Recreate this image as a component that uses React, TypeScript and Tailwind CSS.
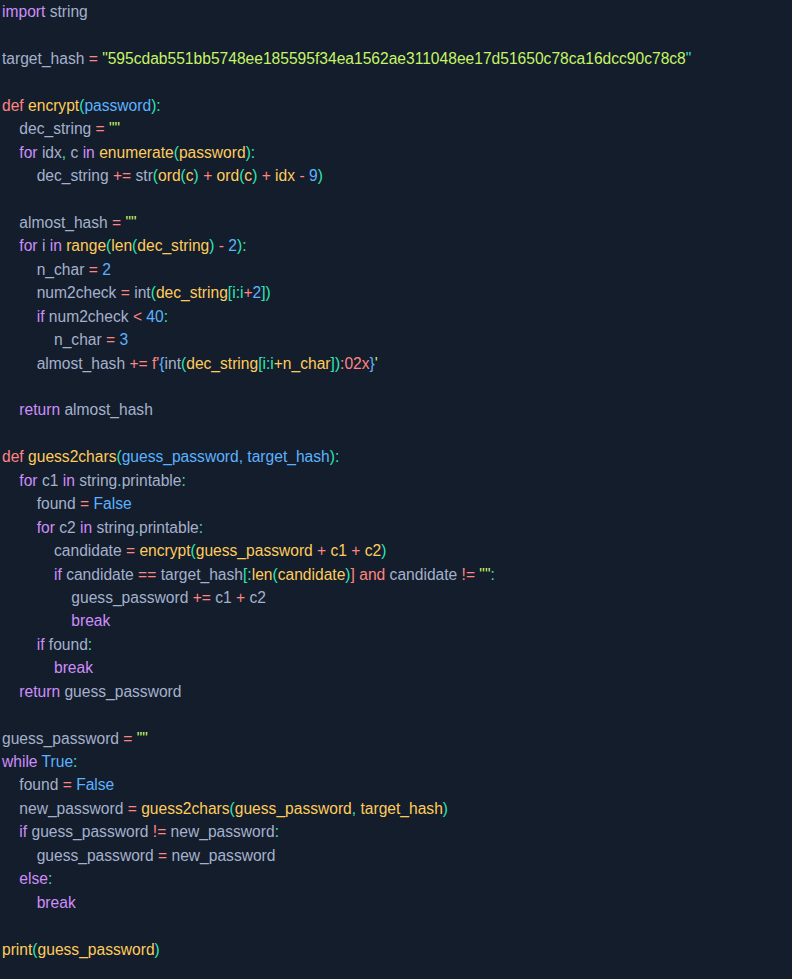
const C = {
  t: 'text-[#a4b1cd]',
  k: 'text-[#cf8dfb]',
  r: 'text-[#ff8484]',
  y: 'text-[#ffcc5c]',
  b: 'text-[#5cb2ff]',
  p: 'text-[#2ee6b6]',
  g: 'text-[#c5f467]',
};

type Tok = [keyof typeof C, string];

const I1 = '    ';
const I2 = '        ';
const I3 = '            ';
const I4 = '                ';

const LINES: Tok[][] = [
  [['k', 'import'], ['t', ' string']],
  [],
  [['t', 'target_hash '], ['r', '='], ['t', ' '], ['g', '"595cdab551bb5748ee185595f34ea1562ae311048ee17d51650c78ca16dcc90c78c8'], ['p', '"']],
  [],
  [['r', 'def'], ['t', ' '], ['y', 'encrypt'], ['p', '('], ['b', 'password'], ['p', '):']],
  [['t', I1 + 'dec_string '], ['r', '='], ['t', ' '], ['g', '""']],
  [['t', I1], ['k', 'for'], ['t', ' idx'], ['p', ','], ['t', ' c '], ['k', 'in'], ['t', ' '], ['y', 'enumerate'], ['p', '('], ['y', 'password'], ['p', '):']],
  [['t', I2 + 'dec_string '], ['r', '+='], ['t', ' str'], ['p', '('], ['y', 'ord'], ['p', '('], ['y', 'c'], ['p', ')'], ['t', ' '], ['r', '+'], ['t', ' '], ['y', 'ord'], ['p', '('], ['y', 'c'], ['p', ')'], ['t', ' '], ['r', '+'], ['y', ' idx '], ['r', '-'], ['t', ' '], ['b', '9'], ['p', ')']],
  [],
  [['t', I1 + 'almost_hash '], ['r', '='], ['t', ' '], ['g', '""']],
  [['t', I1], ['k', 'for'], ['t', ' i '], ['k', 'in'], ['t', ' '], ['y', 'range'], ['p', '('], ['y', 'len'], ['p', '('], ['y', 'dec_string'], ['p', ')'], ['t', ' '], ['r', '-'], ['t', ' '], ['b', '2'], ['p', '):']],
  [['t', I2 + 'n_char '], ['r', '='], ['t', ' '], ['b', '2']],
  [['t', I2 + 'num2check '], ['r', '='], ['t', ' int'], ['p', '('], ['y', 'dec_string'], ['p', '[i:i'], ['r', '+'], ['b', '2'], ['p', '])']],
  [['t', I2], ['k', 'if'], ['t', ' num2check '], ['r', '<'], ['t', ' '], ['b', '40'], ['p', ':']],
  [['t', I3 + 'n_char '], ['r', '='], ['t', ' '], ['b', '3']],
  [['t', I2 + 'almost_hash '], ['r', '+='], ['t', ' '], ['r', "f'"], ['b', '{'], ['t', 'int'], ['p', '('], ['y', 'dec_string'], ['p', '[i:i'], ['y', '+n_char'], ['p', '])'], ['r', ':02x'], ['b', '}'], ['g', "'"]],
  [],
  [['t', I1], ['k', 'return'], ['t', ' almost_hash']],
  [],
  [['r', 'def'], ['t', ' '], ['y', 'guess2chars'], ['p', '('], ['b', 'guess_password, target_hash'], ['p', '):']],
  [['t', I1], ['k', 'for'], ['t', ' c1 '], ['k', 'in'], ['t', ' string'], ['p', '.'], ['t', 'printable'], ['p', ':']],
  [['t', I2 + 'found '], ['r', '='], ['t', ' '], ['b', 'False']],
  [['t', I2], ['k', 'for'], ['t', ' c2 '], ['k', 'in'], ['t', ' string'], ['p', '.'], ['t', 'printable'], ['p', ':']],
  [['t', I3 + 'candidate '], ['r', '='], ['t', ' '], ['y', 'encrypt'], ['p', '('], ['y', 'guess_password '], ['r', '+'], ['y', ' c1 '], ['r', '+'], ['y', ' c2'], ['p', ')']],
  [['t', I3], ['k', 'if'], ['t', ' candidate '], ['r', '=='], ['t', ' target_hash'], ['p', '[:'], ['y', 'len'], ['p', '('], ['y', 'candidate'], ['p', ')'], ['r', ']'], ['t', ' '], ['r', 'and'], ['t', ' candidate '], ['r', '!='], ['t', ' '], ['g', '""'], ['p', ':']],
  [['t', I4 + 'guess_password '], ['r', '+='], ['t', ' c1 '], ['r', '+'], ['t', ' c2']],
  [['t', I4], ['k', 'break']],
  [['t', I2], ['k', 'if'], ['t', ' found'], ['p', ':']],
  [['t', I3], ['k', 'break']],
  [['t', I1], ['k', 'return'], ['t', ' guess_password']],
  [],
  [['t', 'guess_password '], ['r', '='], ['t', ' '], ['g', '""']],
  [['k', 'while'], ['t', ' '], ['b', 'True'], ['p', ':']],
  [['t', I1 + 'found '], ['r', '='], ['t', ' '], ['b', 'False']],
  [['t', I1 + 'new_password '], ['r', '='], ['t', ' '], ['y', 'guess2chars'], ['p', '('], ['y', 'guess_password'], ['p', ','], ['y', ' target_hash'], ['p', ')']],
  [['t', I1], ['k', 'if'], ['t', ' guess_password '], ['r', '!='], ['t', ' new_password'], ['p', ':']],
  [['t', I2 + 'guess_password '], ['r', '='], ['t', ' new_password']],
  [['t', I1], ['k', 'else'], ['p', ':']],
  [['t', I2], ['k', 'break']],
  [],
  [['y', 'print'], ['p', '('], ['y', 'guess_password'], ['p', ')']],
];

export default function App() {
  return (
    <div className="min-h-[979px] w-[792px] bg-[#141d2b] pl-[2px] font-['Liberation_Sans',Arial,sans-serif] text-[15.6px] leading-[23.4375px] text-[#a4b1cd]">
      <pre className="m-0 whitespace-pre font-['Liberation_Sans',Arial,sans-serif]">
        {LINES.map((line, i) => (
          <div key={i} className="h-[23.4375px]">
            {line.map(([c, s], j) => (
              <span key={j} className={C[c]}>
                {s}
              </span>
            ))}
          </div>
        ))}
      </pre>
    </div>
  );
}
